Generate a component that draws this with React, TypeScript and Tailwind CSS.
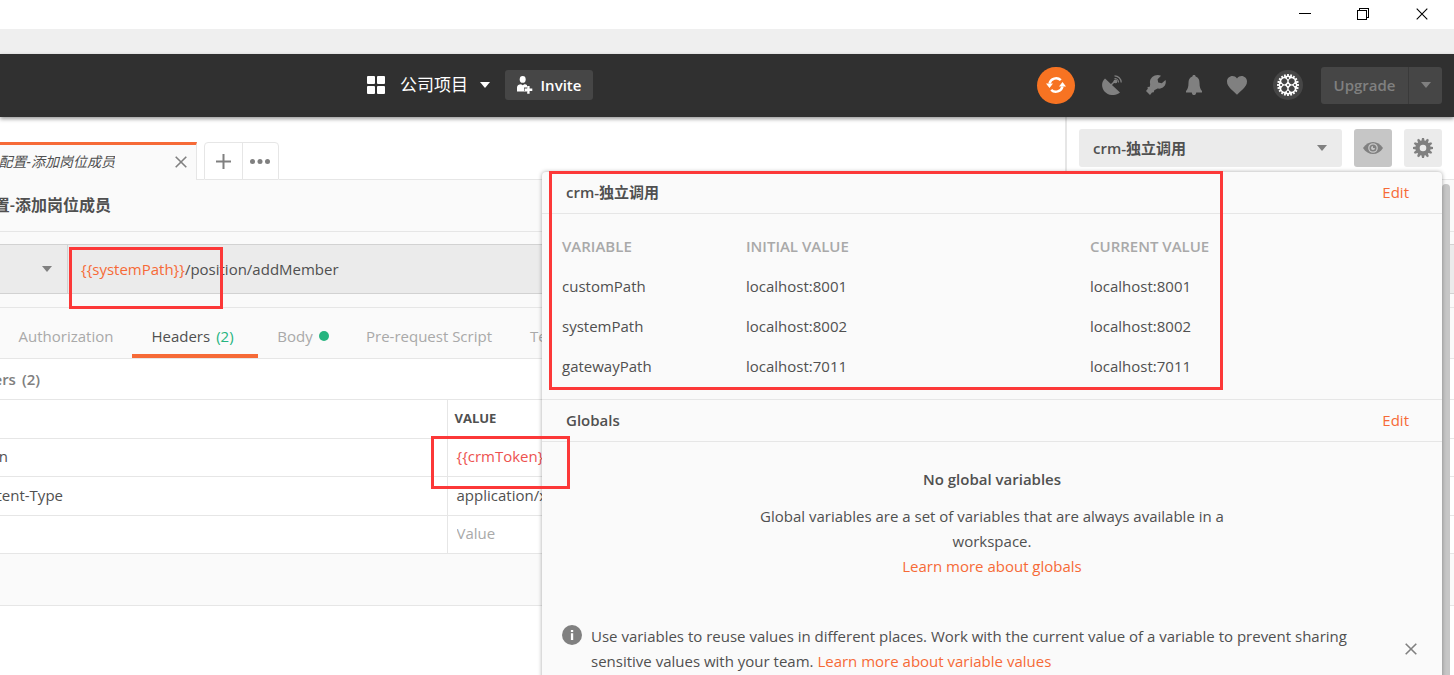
import React from "react";

function Caret({ color }: { color: string }) {
  return (
    <svg width="10" height="6" viewBox="0 0 10 6" className={color} aria-hidden="true">
      <path d="M0 0h10L5 6z" fill="currentColor" />
    </svg>
  );
}

function Cross({ size, color, stroke = 2 }: { size: number; color: string; stroke?: number }) {
  return (
    <svg width={size} height={size} viewBox="0 0 12 12" className={color} aria-hidden="true">
      <path d="M.7.7l10.6 10.6M11.3.7L.7 11.3" stroke="currentColor" strokeWidth={stroke} fill="none" />
    </svg>
  );
}

function WindowBar() {
  return (
    <div className="flex h-[29px] items-start justify-end bg-white pt-2 pr-[26px] text-black">
      <button aria-label="Minimize" className="mr-[46px]">
        <svg width="12" height="12" viewBox="0 0 12 12" shapeRendering="crispEdges"><path d="M0 5h12v1H0z" /></svg>
      </button>
      <button aria-label="Restore" className="mr-[47px]">
        <svg width="12" height="12" viewBox="0 0 12 12" fill="none" stroke="black" shapeRendering="crispEdges">
          <path d="M.5 2.5h9v9h-9zM2.5 2V.5h9v9H10" />
        </svg>
      </button>
      <button aria-label="Close"><Cross size={12} color="text-black" stroke={1.1} /></button>
    </div>
  );
}

function Gear() {
  const teeth = [0, 30, 60, 90, 120, 150, 180, 210, 240, 270, 300, 330];
  return (
    <svg width="20" height="20" viewBox="0 0 20 20" fill="#808080">
      {teeth.map((a) => (
        <path key={a} d="M8.2 3.8L9 0h2l.8 3.800z" transform={`rotate(${a} 10 10)`} />
      ))}
      <circle cx="10" cy="10" r="5.400" fill="none" stroke="#808080" strokeWidth="4.200" />
    </svg>
  );
}

function Wheel() {
  const teeth = Array.from({ length: 20 }, (_, i) => i * 18);
  return (
    <svg width="22" height="22" viewBox="0 0 22 22">
      {teeth.map((a) => (
        <path key={a} d="M11 0v2.400" stroke="white" strokeWidth="1.800" transform={`rotate(${a} 11 11)`} />
      ))}
      <circle cx="11" cy="11" r="9.400" fill="white" />
      <g fill="#464646">
        {[45, 135, 225, 315].map((a) => (
          <circle key={a} cx="11" cy="5.800" r="2.900" transform={`rotate(${a} 11 11)`} />
        ))}
        {[0, 90, 180, 270].map((a) => (
          <circle key={a} cx="11" cy="4.100" r="1.100" transform={`rotate(${a} 11 11)`} />
        ))}
        <circle cx="11" cy="11" r="1" />
      </g>
    </svg>
  );
}

function HeaderBar() {
  return (
    <header className="z-10 flex h-[63px] items-center bg-[#303030] pr-3 pb-px pl-[367px] shadow-[0_2px_4px_rgba(0,0,0,0.4)]">
      <svg width="18" height="18" viewBox="0 0 18 18" fill="white" aria-hidden="true">
        <rect width="8" height="8" rx="1" /><rect x="10" width="8" height="8" rx="1" />
        <rect y="10" width="8" height="8" rx="1" /><rect x="10" y="10" width="8" height="8" rx="1" />
      </svg>
      <button className="ml-[15px] flex items-center gap-3 text-[17px] leading-6 text-white">
        公司项目
        <Caret color="text-white" />
      </button>
      <button className="ml-[15px] flex h-[30px] w-[88px] items-center justify-center gap-2 rounded-[3px] bg-[#464646] text-[15px] font-semibold text-white">
        <svg width="16" height="18" viewBox="0 0 16 18" fill="white" aria-hidden="true">
          <ellipse cx="5.7" cy="3.4" rx="3" ry="3.4" />
          <path d="M0 15.5v-4C0 9 2 8.2 4 8.2l1.7 1 1.7-1c1.200 0 2 .4 2.600 1v2.300H7v3.500h3v.5z" />
          <path d="M10.200 10h2.400v2.600H15.300V15h-2.700v2.700h-2.400V15H7.600v-2.400h2.600z" />
        </svg>
        Invite
      </button>
      <div className="ml-auto flex items-center">
        <button aria-label="Sync" className="flex h-[37px] w-[38px] items-center justify-center rounded-full bg-[#f77322]">
          <svg width="20" height="20" viewBox="0 0 20 20" fill="none" stroke="white" strokeWidth="2.500">
            <path d="M3.500 8.500A6.800 6.800 0 0 1 14.800 5.200M16.500 11.500A6.800 6.800 0 0 1 5.200 14.800" />
            <path d="M0 8.500h7L3.500 13zM13 11.500h7L16.500 7z" fill="white" stroke="none" />
          </svg>
        </button>
        <button aria-label="Capture" className="ml-[27px]">
          <svg width="20" height="20" viewBox="0 0 20 20" fill="#808080">
            <path d="M3 3.500L18 17.500C13 21.500 6 20.500 2.500 16.500C-.8 12.500-.8 7 3 3.500z" />
            <path d="M9 10l4-4" stroke="#808080" strokeWidth="1.500" />
            <circle cx="13.400" cy="6.400" r="1.900" />
            <path d="M12.500 3.500a4 4 0 0 1 4 4M12.500.8a6.700 6.700 0 0 1 6.700 6.700" fill="none" stroke="#808080" strokeWidth="1.200" />
          </svg>
        </button>
        <button aria-label="Settings" className="ml-6">
          <svg width="20" height="20" viewBox="0 0 20 20" fill="#808080">
            <path d="M15 .8L11.600 4.300l.6 3.300 3.600.6L19.500 5c1.500 5-2.500 9.500-8 8.500L8.300 15.300l-.6 1.900-1.700.3L4 20 0 16l1.800-2.200-.3-1.800 2.300-.3L4.200 9C2.500 3.500 9-1.800 15 .8z" />
          </svg>
        </button>
        <button aria-label="Notifications" className="ml-5">
          <svg width="16" height="20" viewBox="0 0 16 20" fill="#808080">
            <path d="M8 0c1.200 0 1.600.7 1.600 1.600 3 1 3.900 3.400 3.900 6.200 0 4.500 1 6.700 2.500 8.200v1.500H0V16c1.500-1.500 2.500-3.700 2.500-8.200 0-2.800.9-5.200 3.900-6.200C6.400.7 6.800 0 8 0zM5.800 17.400h4.400c0 3.400-4.400 3.400-4.400 0z" />
          </svg>
        </button>
        <button aria-label="Favourites" className="ml-[25px]">
          <svg width="20" height="20" viewBox="0 0 20 20" fill="#808080">
            <path d="M10 19.800C7 16 0 12.500 0 6.500 0 1.500 6.500-1.200 10 3.500 13.500-1.200 20 1.500 20 6.500c0 6-7 9.500-10 13.300z" />
          </svg>
        </button>
        <button aria-label="Account" className="ml-[26px] flex h-[30px] w-[30px] items-center justify-center rounded-full bg-[#464646]">
          <Wheel />
        </button>
        <div className="ml-[18px] flex h-[37px] overflow-hidden rounded-[3px] bg-[#464646]">
          <button className="w-[87px] text-[15px] font-semibold text-[#808080]">Upgrade</button>
          <button aria-label="Upgrade options" className="flex w-[34px] items-center justify-center border-l border-[#3a3a3a]">
            <Caret color="text-[#808080]" />
          </button>
        </div>
      </div>
    </header>
  );
}

function TabRow() {
  return (
    <div className="flex h-[63px]">
      <div className="flex flex-1 items-end">
        <div className="flex h-[38px] w-[197px] items-center border-t-[3px] border-r border-t-[#f66a37] border-r-[#e6e6e6] bg-[#fafafa] pb-0.5">
          <span className="flex w-[115px] justify-end overflow-hidden text-[14px] leading-5 whitespace-nowrap text-[#505050] italic">
            位配置-添加岗位成员
          </span>
          <button aria-label="Close tab" className="ml-[60px]"><Cross size={12} color="text-[#808080]" stroke={1.600} /></button>
        </div>
        <div className="h-full w-[7px] border-b border-[#e6e6e6]" />
        <div className="flex h-[38px] w-[75px] rounded-t-[4px] border border-[#e6e6e6] bg-white">
          <button aria-label="New tab" className="flex w-[38px] items-center justify-center border-r border-[#e6e6e6]">
            <svg width="15" height="15" viewBox="0 0 15 15" fill="#808080"><path d="M6.500 0h2v6.500H15v2H8.500V15h-2V8.500H0v-2h6.500z" /></svg>
          </button>
          <button aria-label="Tab options" className="flex flex-1 items-center justify-center pr-px">
            <svg width="20" height="5" viewBox="0 0 20 5" fill="#808080"><circle cx="2.500" cy="2.500" r="2.500" /><circle cx="10" cy="2.500" r="2.500" /><circle cx="17.500" cy="2.500" r="2.500" /></svg>
          </button>
        </div>
        <div className="h-full flex-1 border-b border-[#e6e6e6]" />
      </div>
      <div className="flex w-[389px] items-start gap-3 border-b border-l-2 border-[#e6e6e6] px-3 pt-3">
        <div className="relative flex flex-1">
          <select aria-label="Environment" className="h-[38px] w-full appearance-none rounded-[3px] bg-[#ebebeb] px-[14px] text-[15px] font-semibold text-[#505050]">
            <option>crm-独立调用</option>
          </select>
          <span className="pointer-events-none absolute inset-y-0 right-[15px] flex items-center"><Caret color="text-[#808080]" /></span>
        </div>
        <button aria-label="Quick look" className="flex h-[38px] w-[38px] items-center justify-center rounded-[3px] bg-[#c6c6c6]">
          <svg width="20" height="12" viewBox="0 0 20 12">
            <path d="M0 6C5-2 15-2 20 6 15 14 5 14 0 6z" fill="#808080" />
            <circle cx="10" cy="6" r="4.200" fill="none" stroke="#c6c6c6" strokeWidth="1.300" />
            <path d="M10 4v2h2a2 2 0 1 1-2-2z" fill="#c6c6c6" />
          </svg>
        </button>
        <button aria-label="Manage environments" className="flex h-[38px] w-[38px] items-center justify-center rounded-[3px] bg-[#ebebeb]">
          <Gear />
        </button>
      </div>
    </div>
  );
}

function Request() {
  return (
    <main>
      <div className="bg-[#fafafa]">
        <div className="flex h-[52px] items-center border-b border-[#e6e6e6] pb-0.5">
          <h1 className="flex w-[111px] justify-end overflow-hidden text-[16px] font-semibold whitespace-nowrap">置-添加岗位成员</h1>
        </div>
        <div className="border-b border-[#e6e6e6] pt-3 pb-[13px]">
          <div className="flex h-[50px] items-center border-y border-[#d2d2d2] bg-[#ebebeb]">
            <button aria-label="Method" className="flex h-full w-[68px] items-center justify-end border-r border-[#d2d2d2] pr-[15px]">
              <Caret color="text-[#808080]" />
            </button>
            <div className="pl-[13px] text-[15px]"><span className="text-[#f66a37]">{"{{systemPath}}"}</span>/position/addMember</div>
          </div>
        </div>
        <nav className="flex h-[51px] border-b border-[#e6e6e6] text-[15px] text-[#a9a9a9]">
          <button className="w-[132px] pt-1.5">Authorization</button>
          <button className="flex w-[126px] items-center justify-center gap-1.5 border-b-4 border-[#f66a37] pt-2.5 pr-[5px] text-[#505050]">Headers <span className="text-[#26b47f]">(2)</span></button>
          <button className="flex w-[90px] items-center justify-center gap-1.5 pt-1.5">Body <span className="h-2.5 w-2.5 rounded-full bg-[#26b47f]" /></button>
          <button className="w-[162px] pt-1.5">Pre-request Script</button>
          <button className="pt-1.5 pl-5">Tests</button>
        </nav>
      </div>
      <div className="flex h-10 items-center">
        <h2 className="flex w-10 justify-end gap-1.5 overflow-hidden text-[15px] font-semibold whitespace-nowrap text-[#808080]">
          <span>ers</span>
          <span>(2)</span>
        </h2>
      </div>
      <table className="w-full table-fixed border-collapse border-b border-[#e6e6e6] text-left text-[15px]">
        <tbody>
          <tr className="h-[39px] border-t border-[#e6e6e6]">
            <th className="w-[447px]" aria-label="Key" />
            <th className="border-l border-[#e6e6e6] pl-[7px] text-[13px] font-bold">VALUE</th>
          </tr>
          <tr className="h-[38px] border-t border-[#e6e6e6]">
            <td className="pb-0.5"><span className="flex w-2 justify-end overflow-hidden">n</span></td>
            <td className="border-l border-[#e6e6e6] pb-0.5 pl-[9px] text-[#ed5250]">{"{{crmToken}}"}</td>
          </tr>
          <tr className="h-[39px] border-t border-[#e6e6e6]">
            <td className="pb-0.5"><span className="flex w-[63px] justify-end overflow-hidden whitespace-nowrap">tent-Type</span></td>
            <td className="border-l border-[#e6e6e6] pb-0.5 pl-[9px]">application/x</td>
          </tr>
          <tr className="h-[38px] border-t border-[#e6e6e6]">
            <td />
            <td className="border-l border-[#e6e6e6] pb-0.5 pl-[9px]">
              <input aria-label="Value" placeholder="Value" className="block w-20 placeholder:text-[#a9a9a9]" />
            </td>
          </tr>
        </tbody>
      </table>
      <div className="h-[52px] border-b border-[#e6e6e6] bg-[#fafafa]" />
    </main>
  );
}

const variables = [
  ["customPath", "localhost:8001"],
  ["systemPath", "localhost:8002"],
  ["gatewayPath", "localhost:7011"],
];

function SectionHead({ title }: { title: string }) {
  return (
    <div className="flex h-[42px] items-center justify-between border-b border-[#e6e6e6] pr-[33px] pl-6 text-[15px]">
      <h2 className="font-semibold">{title}</h2>
      <a href="#edit" className="text-[#f66a37]">Edit</a>
    </div>
  );
}

function EnvironmentPanel() {
  return (
    <section className="absolute top-[172px] right-3 h-[560px] w-[900px] rounded-[4px] bg-[#fafafa] text-[15px] shadow-[0_0_4px_rgba(0,0,0,0.35)]">
      <SectionHead title="crm-独立调用" />
      <div className="h-[186px] border-b border-[#e6e6e6] pt-3 pl-5">
        <table className="w-full table-fixed text-left">
          <thead>
            <tr className="h-10 text-[#a9a9a9]">
              <th className="w-[184px] font-semibold">VARIABLE</th>
              <th className="w-[344px] font-semibold">INITIAL VALUE</th>
              <th className="font-semibold">CURRENT VALUE</th>
            </tr>
          </thead>
          <tbody>
            {variables.map(([name, value]) => (
              <tr key={name} className="h-10"><td>{name}</td><td>{value}</td><td>{value}</td></tr>
            ))}
          </tbody>
        </table>
      </div>
      <SectionHead title="Globals" />
      <div className="mx-auto w-[500px] pt-[25px] text-center leading-[25px]">
        <h3 className="mb-3 font-semibold">No global variables</h3>
        <p>Global variables are a set of variables that are always available in a workspace.</p>
        <a href="#globals" className="text-[#f66a37]">Learn more about globals</a>
      </div>
      <div className="mt-[45px] flex pr-[25px] pl-5 leading-[25px]">
        <svg width="20" height="20" viewBox="0 0 20 20" className="mt-px shrink-0" aria-hidden="true">
          <circle cx="10" cy="10" r="10" fill="#808080" />
          <path d="M8.900 5h2.300v2H8.900zM8.900 8.300h2.300V15H8.900z" fill="white" />
        </svg>
        <p className="ml-[9px] w-[780px]">
          Use variables to reuse values in different places. Work with the current value of a variable to prevent sharing sensitive values with your team.{" "}
          <a href="#values" className="text-[#f66a37]">Learn more about variable values</a>
        </p>
        <button aria-label="Dismiss" className="ml-auto"><Cross size={12} color="text-[#808080]" stroke={1.600} /></button>
      </div>
    </section>
  );
}

export default function App() {
  return (
    <div className="relative flex h-screen flex-col overflow-hidden bg-white font-['Open_Sans','Noto_Sans_CJK_SC',sans-serif] text-[#505050]">
      <WindowBar />
      <div className="h-[25px] bg-[#efefef]" />
      <HeaderBar />
      <TabRow />
      <Request />
      <div className="absolute top-[184px] right-1 h-[600px] w-[8px] rounded-full bg-[#c6c6c6]" />
      <EnvironmentPanel />
      <div className="pointer-events-none absolute top-[247px] left-[69px] h-[62px] w-[154px] border-[3px] border-[#fc3838]" />
      <div className="pointer-events-none absolute top-[171px] left-[549px] h-[219px] w-[674px] border-[3px] border-[#fc3838]" />
      <div className="pointer-events-none absolute top-[436px] left-[431px] h-[53px] w-[139px] border-[3px] border-[#fc3838]" />
    </div>
  );
}
